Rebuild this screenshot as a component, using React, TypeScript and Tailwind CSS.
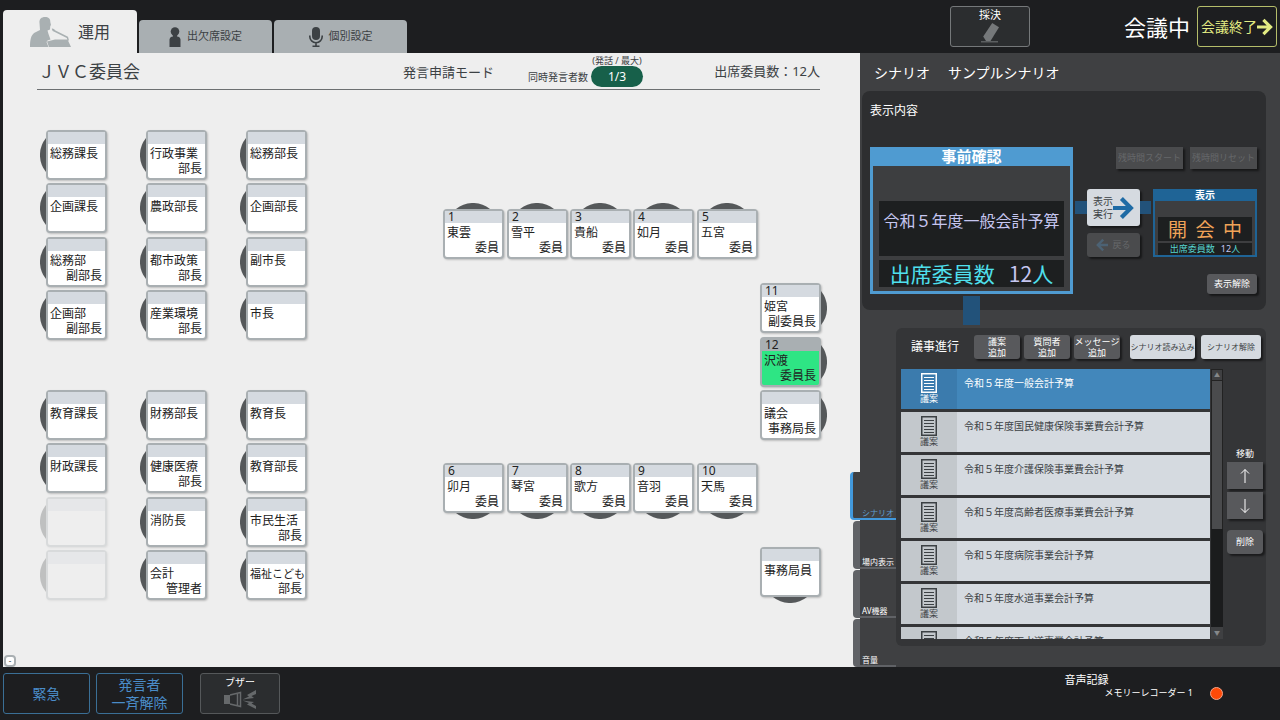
import { useState } from 'react';
import type { ReactNode } from 'react';
import clsx from 'clsx';

type ChairSide = 'left' | 'right' | 'top' | 'bottom';

interface Seat {
  x: number;
  y: number;
  chair: ChairSide;
  no?: number;
  lines: string[];
  speaking?: boolean;
  vacant?: boolean;
}

const OFFICE_COLUMNS: { x: number; names: string[][] }[] = [
  {
    x: 43,
    names: [['総務課長'], ['企画課長'], ['総務部', '副部長'], ['企画部', '副部長'], ['教育課長'], ['財政課長'], [], []],
  },
  {
    x: 143,
    names: [
      ['行政事業', '部長'],
      ['農政部長'],
      ['都市政策', '部長'],
      ['産業環境', '部長'],
      ['財務部長'],
      ['健康医療', '部長'],
      ['消防長'],
      ['会計', '管理者'],
    ],
  },
  {
    x: 243,
    names: [
      ['総務部長'],
      ['企画部長'],
      ['副市長'],
      ['市長'],
      ['教育長'],
      ['教育部長'],
      ['市民生活', '部長'],
      ['福祉こども', '部長'],
    ],
  },
];

const OFFICE_ROWS = [40, 93, 147, 200, 300, 353, 407, 460];
const MEMBER_COLUMNS = [440, 504, 567, 630, 694];
const UPPER_MEMBERS = ['東雲', '雪平', '貴船', '如月', '五宮'];
const LOWER_MEMBERS = ['卯月', '琴宮', '歌方', '音羽', '天馬'];

const SEATS: Seat[] = [
  ...OFFICE_COLUMNS.flatMap(({ x, names }) =>
    names.map((lines, i): Seat => ({ x, y: OFFICE_ROWS[i], chair: 'left', lines, vacant: lines.length === 0 }))
  ),
  ...UPPER_MEMBERS.map((name, i): Seat => ({ x: MEMBER_COLUMNS[i], y: 119, chair: 'top', no: i + 1, lines: [name, '委員'] })),
  ...LOWER_MEMBERS.map((name, i): Seat => ({ x: MEMBER_COLUMNS[i], y: 373, chair: 'bottom', no: i + 6, lines: [name, '委員'] })),
  { x: 757, y: 193, chair: 'right', no: 11, lines: ['姫宮', '副委員長'] },
  { x: 757, y: 247, chair: 'right', no: 12, lines: ['沢渡', '委員長'], speaking: true },
  { x: 757, y: 300, chair: 'right', lines: ['議会', '事務局長'] },
  { x: 757, y: 457, chair: 'bottom', lines: ['事務局員'] },
];

const AGENDA = [
  '令和５年度一般会計予算',
  '令和５年度国民健康保険事業費会計予算',
  '令和５年度介護保険事業費会計予算',
  '令和５年度高齢者医療事業費会計予算',
  '令和５年度病院事業会計予算',
  '令和５年度水道事業会計予算',
  '令和５年度下水道事業会計予算',
];

const SIDE_TABS = ['シナリオ', '場内表示', 'AV機器', '音量'];

const CHAIR_SHAPES: Record<ChairSide, { className: string; viewBox: string; d: string }> = {
  left: { className: '-left-1.5 top-2 w-1.5 h-[34px]', viewBox: '0 0 6 34', d: 'M6 0A27 27 0 0 0 6 34Z' },
  right: { className: '-right-1.5 top-2 w-1.5 h-[34px]', viewBox: '0 0 6 34', d: 'M0 0A27 27 0 0 1 0 34Z' },
  top: { className: '-top-1.5 left-[13px] w-[34px] h-1.5', viewBox: '0 0 34 6', d: 'M0 6A27 27 0 0 1 34 6Z' },
  bottom: { className: '-bottom-1.5 left-[13px] w-[34px] h-1.5', viewBox: '0 0 34 6', d: 'M0 0A27 27 0 0 0 34 0Z' },
};

function SeatCard({ seat }: { seat: Seat }) {
  const chair = CHAIR_SHAPES[seat.chair];
  return (
    <button
      type="button"
      aria-label={seat.vacant ? '空席' : seat.lines.join(' ')}
      className={clsx('absolute w-[61px] h-[50px]', seat.vacant && 'opacity-30')}
      style={{ left: seat.x, top: seat.y }}
    >
      <svg className={clsx('absolute', chair.className)} viewBox={chair.viewBox} fill="#55585a">
        <path d={chair.d} />
      </svg>
      <span
        className={clsx(
          'flex flex-col w-full h-full rounded border-2 border-[#a9afb2] text-xs leading-[15px] text-[#222] shadow-[1px_1px_2px_rgba(0,0,0,0.2)]',
          seat.vacant ? 'bg-[#eee]' : seat.speaking ? 'bg-[#2ee584]' : 'bg-white'
        )}
      >
        <span className={clsx('h-3 shrink-0 px-[3px] text-left leading-3', seat.speaking ? 'bg-[#a9afb2]' : 'bg-[#d5dae0]')}>
          {seat.no}
        </span>
        {seat.lines.map((line, i) => (
          <span
            key={line}
            className={clsx(
              'block whitespace-nowrap',
              i === 0 ? 'mt-0.5 pl-0.5 text-left' : 'pr-[3px] text-right',
              line.length > 4 && 'text-[11px]'
            )}
          >
            {line}
          </span>
        ))}
      </span>
    </button>
  );
}

function SpeakerIcon() {
  return (
    <svg viewBox="0 0 41 30" className="w-[41px] h-[30px]" fill="#a9b0b2">
      <path d="M9.500 6C9 2 11.500 0 15 0C18.500 0 20.500 1.500 20.300 5L21 8L20.300 9L20 12.500L17.500 13.500L18.500 17L20.500 22.500L17.500 23.500L16.500 25L18.500 30H0C0 23 1 18 4.500 15.800L10 13Z" />
      <path d="M17 24.500L25 22.500H37.500L41 30H19Z" />
      <path d="M21.700 11.700Q23.500 11.200 25.500 13.500L38 19.700L39 23.500H37.500L36.800 21L24.800 15Q22 14.500 21.700 11.700Z" />
    </svg>
  );
}

function PersonIcon() {
  return (
    <svg viewBox="0 0 12 20" className="w-3 h-5" fill="#3c4144">
      <circle cx="6" cy="4.500" r="4.300" />
      <path d="M0.500 20V12.500Q1 9.500 4 9.500L3.500 7.500H8.500L8 9.500Q11 9.500 11.500 12.500V20Z" />
    </svg>
  );
}

function MicIcon() {
  return (
    <svg viewBox="0 0 14 20" className="w-3.5 h-5">
      <rect x="3" y="0" width="8" height="13" rx="4" fill="#3c4144" />
      <path d="M0.800 8.500V9.500A6.200 6.200 0 0 0 13.200 9.500V8.500M7 15.500V19M3.500 19.200H10.500" fill="none" stroke="#3c4144" strokeWidth="1.600" />
    </svg>
  );
}

function BallotIcon() {
  return (
    <svg viewBox="0 0 20 20" className="w-5 h-5" fill="#75787a">
      <path d="M12.200 0L19 4.300L10.500 18H6L3.200 13.500Z" />
      <path d="M1 18H18V19.500H1Z" fill="#5c5f61" />
    </svg>
  );
}

function BuzzerIcon() {
  return (
    <svg viewBox="0 0 32 20" className="w-8 h-5" fill="#66696b">
      <path d="M0 5H6V14H0Z" />
      <path d="M6 5L16.500 2.500V16.500L6 14M13.500 3V16" fill="none" stroke="#66696b" strokeWidth="1.500" />
      <path d="M32 0L23 5L25 6.500L18.500 9.500L30 8L27.500 6L32 4Z" />
      <path d="M18.500 10.500L25 13L23 14.500L32 19V16L27.500 13.500L30 12Z" />
    </svg>
  );
}

function DocumentIcon() {
  return (
    <svg viewBox="0 0 16 20" className="w-4 h-5" fill="none" stroke="currentColor">
      <rect x="0.750" y="0.750" width="14.500" height="18.500" strokeWidth="1.500" />
      <path d="M3 4.500H13M3 7.500H13M3 10.500H13M3 13.500H13M3 16.500H13" strokeWidth="1" />
    </svg>
  );
}

function ArrowIcon({ className }: { className: string }) {
  return (
    <svg viewBox="0 0 20 22" className={className} fill="none" stroke="currentColor">
      <path d="M0 11H17M8 2L17 11L8 20" strokeWidth="4" />
    </svg>
  );
}

interface PanelButtonProps {
  className: string;
  light?: boolean;
  disabled?: boolean;
  children: ReactNode;
}

function PanelButton({ className, light, disabled, children }: PanelButtonProps) {
  return (
    <button
      type="button"
      disabled={disabled}
      className={clsx(
        'flex items-center justify-center shrink-0 whitespace-nowrap shadow-[2px_2px_2px_rgba(0,0,0,0.5)]',
        light ? 'bg-[#d5dae0] text-[#3c4144]' : disabled ? 'bg-[#4a4b4d] text-[#66686a]' : 'bg-[#58595c] text-white',
        className
      )}
    >
      {children}
    </button>
  );
}

function Header() {
  return (
    <header className="flex justify-between px-[3px] h-[53px]">
      <nav className="flex items-end gap-0.5" role="tablist">
        <button type="button" role="tab" aria-selected="true" className="flex items-center justify-center gap-[7px] w-[134px] h-[43px] rounded-t-sm bg-[#eee] text-base text-[#3c4144]">
          <SpeakerIcon />
          運用
        </button>
        <button type="button" role="tab" aria-selected="false" className="flex items-center justify-center gap-1.5 w-[133px] h-[33px] rounded-t-sm bg-[#a9afb2] text-[11px] text-[#3c4144]">
          <PersonIcon />
          出欠席設定
        </button>
        <button type="button" role="tab" aria-selected="false" className="flex items-center justify-center gap-1.5 w-[133px] h-[33px] rounded-t-sm bg-[#a9afb2] text-[11px] text-[#3c4144]">
          <MicIcon />
          個別設定
        </button>
      </nav>
      <div className="flex items-start pt-1.5">
        <button type="button" className="flex flex-col items-center w-20 h-[41px] rounded-[3px] border border-[#75787a] bg-[#2b2d2f] text-[11px] leading-4 text-white">
          採決
          <BallotIcon />
        </button>
        <p className="ml-[94px] text-[22px] leading-[42px] text-white">会議中</p>
        <button type="button" className="ml-[7px] flex items-center justify-center w-20 h-[41px] rounded-[3px] border border-[#b5bd6a] text-sm text-[#e3ec83] whitespace-nowrap">
          会議終了
          <ArrowIcon className="w-4 h-[18px]" />
        </button>
      </div>
    </header>
  );
}

function SeatingPlan() {
  return (
    <section className="flex flex-col flex-1 min-w-0 bg-[#eee] text-[#3c4144]">
      <div className="flex items-center justify-between h-[37px] ml-[34px] mr-10 border-b border-[#6c6f71]">
        <h1 className="text-[17px] w-[366px] shrink-0 pl-px pt-0.5">ＪＶＣ委員会</h1>
        <p className="text-[13px] whitespace-nowrap pt-1">発言申請モード</p>
        <div className="flex items-end gap-[3px] ml-[34px] self-end pb-0.5">
          <span className="text-[10px] leading-5 whitespace-nowrap">同時発言者数</span>
          <div className="flex flex-col items-center">
            <span className="text-[9px] leading-[10px] whitespace-nowrap">(発話 / 最大)</span>
            <span className="w-[52px] rounded-full bg-[#17604a] text-center text-xs leading-[21px] text-white">1/3</span>
          </div>
        </div>
        <p className="flex-1 text-right text-[13px] whitespace-nowrap pt-0.5">出席委員数：12人</p>
      </div>
      <div className="relative flex-1">
        {SEATS.map((seat) => (
          <SeatCard key={`${seat.x}-${seat.y}`} seat={seat} />
        ))}
        <button type="button" aria-label="縮小" className="absolute left-px bottom-0 flex items-center justify-center w-3 h-3 rounded border-2 border-[#a9afb2] bg-white text-[8px] leading-none">
          -
        </button>
      </div>
    </section>
  );
}

function DisplayCard() {
  return (
    <section className="relative ml-0.5 mr-3.5 pt-3 pb-4 pl-2 pr-[9px] rounded-lg bg-[#2d2e30]">
      <h3 className="text-xs leading-4 text-white">表示内容</h3>
      <div className="flex mt-7">
        <div className="flex flex-col w-[203px] h-[147px] shrink-0 border-[3px] border-t-0 border-[#4f9bd1] bg-[#3d3e40]">
          <h4 className="h-[19px] bg-[#4f9bd1] text-center text-[15px] leading-[19px] font-bold text-white">事前確認</h4>
          <p className="mx-1.5 mt-[35px] h-[55px] bg-[#1d1f20] pt-2 text-center text-base leading-6 text-[#c6c6f0] whitespace-nowrap">
            令和５年度一般会計予算
          </p>
          <p className="mx-1.5 mt-1 flex justify-center gap-3.5 bg-[#1d1f20] font-['Noto_Sans_CJK_JP',sans-serif] text-[21px] leading-[27px] text-[#4fe0ee]">
            <span>出席委員数</span>
            <span>
              <span className="text-[#c6c6f0]">12</span>人
            </span>
          </p>
        </div>
        <div className="flex-1">
          <div className="flex justify-end gap-[7px]">
            <PanelButton disabled className="w-[67px] h-[22px] text-[9px]">残時間スタート</PanelButton>
            <PanelButton disabled className="w-[67px] h-[22px] text-[9px]">残時間リセット</PanelButton>
          </div>
          <div className="flex justify-end mt-5">
            <span className="w-3 h-[13px] mt-3 bg-[#22527a]" />
            <div className="flex flex-col gap-[7px]">
              <PanelButton light className="w-[53px] h-[37px] rounded-[3px] text-[10px] leading-[13px]">
                <span>
                  表示
                  <br />
                  実行
                </span>
                <ArrowIcon className="w-[21px] h-6 text-[#1f6ba5]" />
              </PanelButton>
              <PanelButton disabled className="w-[53px] h-6 gap-1 rounded-[3px] text-[9px]">
                <ArrowIcon className="w-3 h-3.5 rotate-180 text-[#4c6274]" />
                戻る
              </PanelButton>
            </div>
            <span className="w-[11px] h-[13px] mt-3 mr-0.5 bg-[#22527a]" />
            <div className="flex flex-col w-[104px] h-[68px] border-2 border-t-0 border-[#1f6496] bg-[#3d3e40]">
              <h4 className="h-3 bg-[#1f6496] text-center text-[10px] leading-3 font-bold text-white">表示</h4>
              <p className="mx-[3px] mt-4 bg-[#1d1f20] font-['Noto_Sans_CJK_JP',sans-serif] text-center text-[19px] leading-6 text-[#f0a358] whitespace-pre">開  会  中</p>
              <p className="mx-[3px] mt-0.5 flex justify-center gap-1.5 bg-[#1d1f20] text-[9px] leading-3 text-[#56d3cf]">
                <span>出席委員数</span>
                <span>
                  <span className="text-[#c6c6f0]">12</span>人
                </span>
              </p>
            </div>
          </div>
          <div className="flex justify-end mt-[17px]">
            <PanelButton className="w-[50px] h-5 rounded-[3px] text-[9px]">表示解除</PanelButton>
          </div>
        </div>
      </div>
      {/* connector down to the agenda */}
      <span className="absolute left-[101px] -bottom-[15px] w-[17px] h-[29px] bg-[#22527a]" />
    </section>
  );
}

function AgendaCard() {
  const [selected, setSelected] = useState(0);

  return (
    <section className="flex-1 min-w-0 mt-[18px] mr-3.5 mb-[21px] pt-[7px] pl-[5px] pr-[3px] pb-[7px] rounded-md bg-[#343537] text-white">
      <div className="flex items-center">
        <h3 className="w-[63px] ml-2.5 text-xs">議事進行</h3>
        <div className="flex gap-1">
          {['議案', '質問者', 'メッセージ'].map((label) => (
            <PanelButton key={label} className="w-[46px] h-6 rounded-[3px] text-[9px] leading-[11px]">
              <span>
                {label}
                <br />
                追加
              </span>
            </PanelButton>
          ))}
        </div>
        <div className="flex gap-1.5 ml-2.5">
          <PanelButton light className="w-[65px] h-6 rounded-[3px] text-[8px]">シナリオ読み込み</PanelButton>
          <PanelButton light className="w-[60px] h-6 rounded-[3px] text-[8px]">シナリオ解除</PanelButton>
        </div>
      </div>
      <div className="flex mt-2.5">
        <ul className="flex flex-col flex-1 gap-[3px] h-[270px] overflow-hidden">
          {AGENDA.map((title, i) => (
            <li key={title} className="shrink-0">
              <button
                type="button"
                onClick={() => setSelected(i)}
                className={clsx(
                  'flex w-full h-10 text-left',
                  i === selected ? 'bg-[#4287bb] text-white' : 'bg-[#d5dae0] text-[#3c4144]'
                )}
              >
                <span
                  className={clsx(
                    'flex flex-col items-center w-14 h-full pt-1 text-[9px] leading-3',
                    i === selected ? 'bg-[#3b7bad]' : 'bg-[#c3c8cc]'
                  )}
                >
                  <DocumentIcon />
                  議案
                </span>
                <span className="pl-[7px] pt-1.5 text-[10px] leading-4">{title}</span>
              </button>
            </li>
          ))}
        </ul>
        <div className="flex flex-col w-3 ml-px bg-[#1b1c1d] text-[6px] text-[#85888a]">
          <span className="h-3 border border-[#222] bg-[#3f4042] text-center leading-[10px]">▲</span>
          <span className="h-[148px] border-x border-[#222] bg-[#4a4b4d]" />
          <span className="mt-auto h-3 bg-[#3f4042] text-center leading-3">▼</span>
        </div>
        <div className="flex flex-col ml-1 pt-[77px] text-[9px]">
          <span className="text-center leading-4">移動</span>
          <PanelButton className="w-9 h-[27px]">
            <svg viewBox="0 0 12 16" className="w-3 h-4" fill="none" stroke="currentColor">
              <path d="M6 15V1.500M2 5.500L6 1.500L10 5.500" />
            </svg>
          </PanelButton>
          <PanelButton className="w-9 h-[27px] mt-[3px]">
            <svg viewBox="0 0 12 16" className="w-3 h-4" fill="none" stroke="currentColor">
              <path d="M6 1V14.500M2 10.500L6 14.500L10 10.500" />
            </svg>
          </PanelButton>
          <PanelButton className="w-9 h-6 mt-[11px] rounded-sm">削除</PanelButton>
        </div>
      </div>
    </section>
  );
}

function ScenarioPanel() {
  return (
    <aside className="flex flex-col w-[420px] shrink-0 bg-[#3f4042]">
      <div className="flex items-center gap-[18px] h-[38px] pl-3.5 pt-0.5 text-sm text-white">
        <h2>シナリオ</h2>
        <p>サンプルシナリオ</p>
      </div>
      <DisplayCard />
      <div className="flex flex-1">
        <nav className="flex flex-col justify-end gap-px w-9 shrink-0" role="tablist">
          {SIDE_TABS.map((label, i) => (
            <button
              key={label}
              type="button"
              role="tab"
              aria-selected={i === 0}
              className={clsx(
                'flex items-end h-12 border-b-2 bg-[#3f4042] text-[8px] leading-[10px] whitespace-nowrap rounded-l-sm',
                i === 0
                  ? '-ml-2.5 border-l-[3px] border-[#4299dc] pl-[9px] text-[#5f9ccb]'
                  : '-ml-[7px] border-l-[7px] border-[#606266] pl-0.5 text-white'
              )}
            >
              {label}
            </button>
          ))}
        </nav>
        <AgendaCard />
      </div>
    </aside>
  );
}

function Footer() {
  return (
    <footer className="flex items-start justify-between h-[54px] pt-1.5 pl-[3px] text-white">
      <div className="flex">
        <button type="button" className="w-[87px] h-[41px] rounded-[3px] border border-[#3a6f96] text-sm text-[#4a8cc8]">緊急</button>
        <button type="button" className="ml-1.5 w-[87px] h-[41px] rounded-[3px] border border-[#3a6f96] text-sm leading-[18px] text-[#4a8cc8]">
          発言者
          <br />
          一斉解除
        </button>
        <button type="button" className="ml-[17px] flex flex-col items-center w-20 h-[41px] rounded-[3px] border border-[#55585a] bg-[#2b2d2f] text-[10px] leading-4">
          ブザー
          <BuzzerIcon />
        </button>
      </div>
      <div className="flex items-end gap-[17px] pr-[57px]">
        <div className="text-[11px] leading-[13px]">
          <p className="-ml-10">音声記録</p>
          <p className="text-[9px] leading-[14px]">メモリーレコーダー 1</p>
        </div>
        <span className="w-[13px] h-[13px] rounded-full border border-[#f5a58a] bg-[#ff4a08]" />
      </div>
    </footer>
  );
}

export default function App() {
  return (
    <div className="flex flex-col min-h-screen bg-[#1d1e20] font-['Noto_Sans','Noto_Sans_CJK_JP',sans-serif]">
      <Header />
      <main className="flex flex-1 pl-[3px]">
        <SeatingPlan />
        <ScenarioPanel />
      </main>
      <Footer />
    </div>
  );
}
